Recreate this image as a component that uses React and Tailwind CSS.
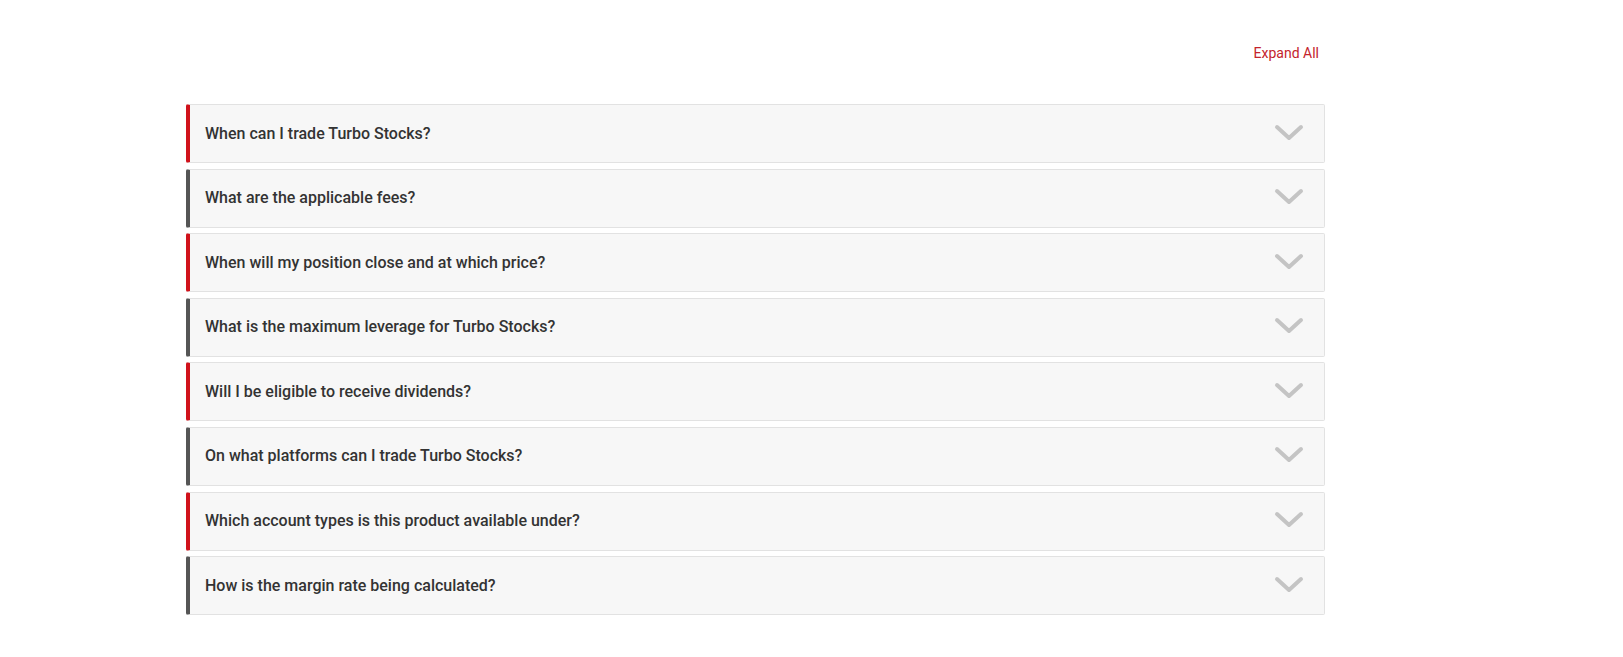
import React from "react";

const questions = [
  "When can I trade Turbo Stocks?",
  "What are the applicable fees?",
  "When will my position close and at which price?",
  "What is the maximum leverage for Turbo Stocks?",
  "Will I be eligible to receive dividends?",
  "On what platforms can I trade Turbo Stocks?",
  "Which account types is this product available under?",
  "How is the margin rate being calculated?",
];

function Chevron() {
  return (
    <svg width="30" height="18" viewBox="0 0 30 18" className="block">
      <polyline
        points="3,3 15,14 27,3"
        fill="none"
        stroke="#c4c4c4"
        strokeWidth="4"
        strokeLinecap="round"
        strokeLinejoin="round"
      />
    </svg>
  );
}

export default function App() {
  return (
    <div className="min-h-screen bg-white" style={{ fontFamily: "Roboto, 'Liberation Sans', sans-serif" }}>
      <div className="ml-[186px] w-[1139px] pt-[43px]">
        <div className="flex justify-end pr-[6px]">
          <button className="text-[14px] leading-[20px] text-[#c4232c]">Expand All</button>
        </div>

        <div className="mt-[41px] flex flex-col gap-[5.6px]">
          {questions.map((q, i) => (
            <div
              key={q}
              className={
                "flex h-[59px] items-center justify-between rounded-[2px] border border-l-4 border-[#e2e2e2] bg-[#f7f7f7] pl-[15px] pr-[20px] " +
                (i % 2 === 0 ? "border-l-[#d0121b]" : "border-l-[#555555]")
              }
            >
              <span className="text-[16px] font-medium text-[#333333]">{q}</span>
              <span className="-mt-[2px]">
                <Chevron />
              </span>
            </div>
          ))}
        </div>
      </div>
    </div>
  );
}
